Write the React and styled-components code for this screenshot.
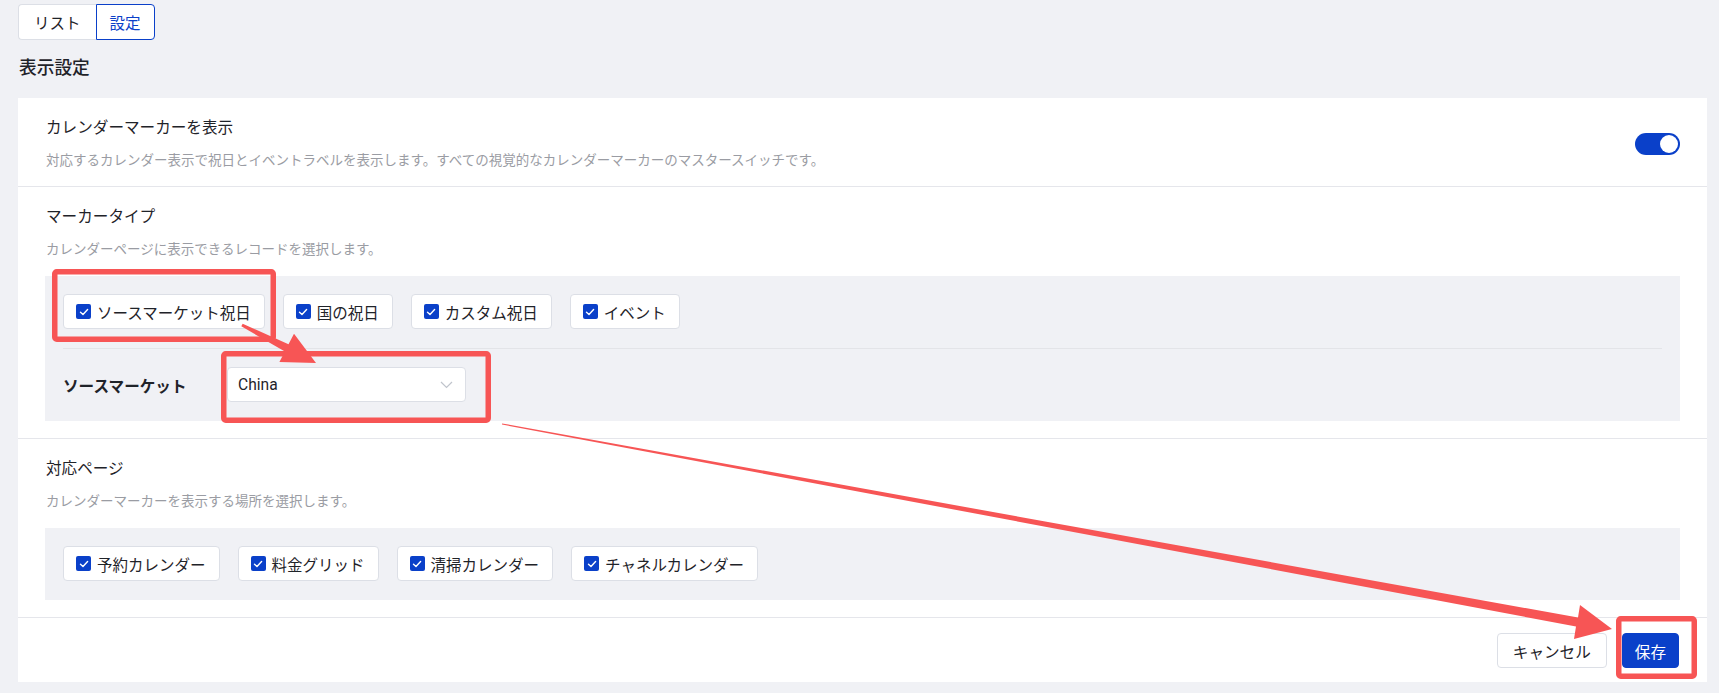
import React from 'react'
import styled, { createGlobalStyle } from 'styled-components'

const BLUE = '#0a40c9'
const RED = '#f75555'

const GlobalStyle = createGlobalStyle`
    body {
        margin: 0;
        background: #f0f1f5;
        font-family: Roboto, "Noto Sans CJK JP", sans-serif;
        color: #1f2329;
    }
`

const Wrapper = styled.div`
    position: relative;
    min-height: 693px;
    padding: 4px 12px 0 18px;
    box-sizing: border-box;
`

const Tabs = styled.div`
    display: inline-flex;
    height: 36px;
`

const Tab = styled.div`
    display: flex;
    align-items: center;
    padding: 0 ${p => p.$pad}px;
    font-size: 15.5px;
    background: #fff;
    color: ${p => p.$active ? BLUE : '#1f2329'};
    border: 1px solid ${p => p.$active ? BLUE : '#dcdfe6'};
    border-radius: ${p => p.$active ? '0 4px 4px 0' : '4px 0 0 4px'};
    ${p => !p.$active && 'border-right: none;'}
`

const Heading = styled.h2`
    margin: 16px 0 18px 1px;
    font-size: 17.7px;
    line-height: 24px;
    font-weight: 500;
    color: #1f2329;
`

const Card = styled.div`
    background: #fff;
`

const Section = styled.div`
    display: flex;
    align-items: center;
    justify-content: space-between;
    padding: 20px 27px 17px 28px;
    border-bottom: 1px solid #e5e6eb;
`

const SectionBody = styled.div`
    flex: 1;
`

const Title = styled.div`
    font-size: 15.6px;
    line-height: 20px;
`

const Desc = styled.div`
    margin-top: 13px;
    font-size: 13.5px;
    line-height: 18px;
    color: #9a9ca3;
`

const Toggle = styled.div`
    width: 45px;
    height: 22px;
    border-radius: 11px;
    background: ${BLUE};
    display: flex;
    align-items: center;
    justify-content: flex-end;
    padding: 0 2px;
    box-sizing: border-box;

    &::after {
        content: '';
        width: 18px;
        height: 18px;
        border-radius: 50%;
        background: #fff;
    }
`

const GrayBox = styled.div`
    margin: 18px 0 0 -1px;
    background: #f0f1f5;
    padding: 18px 18px 19px;
`

const ChipRow = styled.div`
    display: flex;
    gap: 18px;
`

const Chip = styled.label`
    display: flex;
    align-items: center;
    gap: 6px;
    height: 35px;
    box-sizing: border-box;
    padding: 0 13px 0 12px;
    background: #fff;
    border: 1px solid #dcdfe6;
    border-radius: 4px;
    font-size: 15.5px;
    color: #1f2329;
`

const Box = styled.span`
    width: 15px;
    height: 15px;
    border-radius: 2px;
    background: ${BLUE};
    display: flex;
    align-items: center;
    justify-content: center;
`

const InnerDivider = styled.div`
    height: 1px;
    background: #e3e4e8;
    margin: 19px 0 18px;
`

const FieldRow = styled.div`
    display: flex;
    align-items: center;
`

const FieldLabel = styled.div`
    width: 164px;
    font-size: 15.6px;
    font-weight: 700;
    color: #1f2329;
`

const Select = styled.div`
    width: 239px;
    height: 35px;
    box-sizing: border-box;
    background: #fff;
    border: 1px solid #dcdfe6;
    border-radius: 4px;
    padding: 0 12px 0 10px;
    display: flex;
    align-items: center;
    justify-content: space-between;
    font-size: 15.6px;
    color: #1f2329;
`

const Footer = styled.div`
    display: flex;
    justify-content: flex-end;
    gap: 15px;
    padding: 15px 28px 14px;
`

const Button = styled.button`
    height: 35px;
    padding: 0 ${p => p.$primary ? 12 : 15}px;
    border-radius: 4px;
    font-family: inherit;
    font-size: 15.6px;
    border: 1px solid ${p => p.$primary ? BLUE : '#dcdfe6'};
    background: ${p => p.$primary ? BLUE : '#fff'};
    color: ${p => p.$primary ? '#fff' : '#1f2329'};
`

const Overlay = styled.svg`
    position: absolute;
    top: 0;
    left: 0;
    pointer-events: none;
`

const Check = () => (
    <svg width="10" height="8" viewBox="0 0 10 8">
        <path d="M1.5 4.2 L4 6.5 L8.6 1.6" fill="none" stroke="#fff" strokeWidth="1.4" strokeLinecap="round" strokeLinejoin="round" />
    </svg>
)

const CheckChip = ({ children }) => (
    <Chip>
        <Box><Check /></Box>
        {children}
    </Chip>
)

const Chevron = () => (
    <svg width="13" height="8" viewBox="0 0 13 8">
        <path d="M1 1 L6.5 6.5 L12 1" fill="none" stroke="#c0c4cc" strokeWidth="1.2" />
    </svg>
)

const markerTypes = ['ソースマーケット祝日', '国の祝日', 'カスタム祝日', 'イベント']
const pages = ['予約カレンダー', '料金グリッド', '清掃カレンダー', 'チャネルカレンダー']

const App = () => {
    return (
        <Wrapper>
            <GlobalStyle />
            <Tabs>
                <Tab $pad={15}>リスト</Tab>
                <Tab $pad={13} $active>設定</Tab>
            </Tabs>
            <Heading>表示設定</Heading>

            <Card>
                <Section>
                    <SectionBody>
                        <Title>カレンダーマーカーを表示</Title>
                        <Desc>対応するカレンダー表示で祝日とイベントラベルを表示します。すべての視覚的なカレンダーマーカーのマスタースイッチです。</Desc>
                    </SectionBody>
                    <Toggle />
                </Section>

                <Section>
                    <SectionBody>
                        <Title>マーカータイプ</Title>
                        <Desc>カレンダーページに表示できるレコードを選択します。</Desc>
                        <GrayBox>
                            <ChipRow>
                                {markerTypes.map(t => <CheckChip key={t}>{t}</CheckChip>)}
                            </ChipRow>
                            <InnerDivider />
                            <FieldRow>
                                <FieldLabel>ソースマーケット</FieldLabel>
                                <Select>
                                    China
                                    <Chevron />
                                </Select>
                            </FieldRow>
                        </GrayBox>
                    </SectionBody>
                </Section>

                <Section>
                    <SectionBody>
                        <Title>対応ページ</Title>
                        <Desc>カレンダーマーカーを表示する場所を選択します。</Desc>
                        <GrayBox>
                            <ChipRow>
                                {pages.map(t => <CheckChip key={t}>{t}</CheckChip>)}
                            </ChipRow>
                        </GrayBox>
                    </SectionBody>
                </Section>

                <Footer>
                    <Button>キャンセル</Button>
                    <Button $primary>保存</Button>
                </Footer>
            </Card>

            {/* annotation marks drawn over the screenshot */}
            <Overlay width="1719" height="693" viewBox="0 0 1719 693">
                <g fill="none" stroke={RED} strokeWidth="5.5">
                    <rect x="54.75" y="271.75" width="218.5" height="67.5" rx="2" />
                    <rect x="223.75" y="353.75" width="264.5" height="66.5" rx="2" />
                    <rect x="1618.75" y="618.75" width="75.5" height="57.5" rx="2" />
                </g>
                <g fill={RED}>
                    <polygon points="242.7,323.7 288.5,344.3 294,333.7 316,363 279.4,362.1 284.9,351.5 241.3,326.3" />
                    <polygon points="502,423.4 1578,617.6 1580,605 1612,629 1574,639 1576,626.4 502,424.6" />
                </g>
            </Overlay>
        </Wrapper>
    )
}

export default App
